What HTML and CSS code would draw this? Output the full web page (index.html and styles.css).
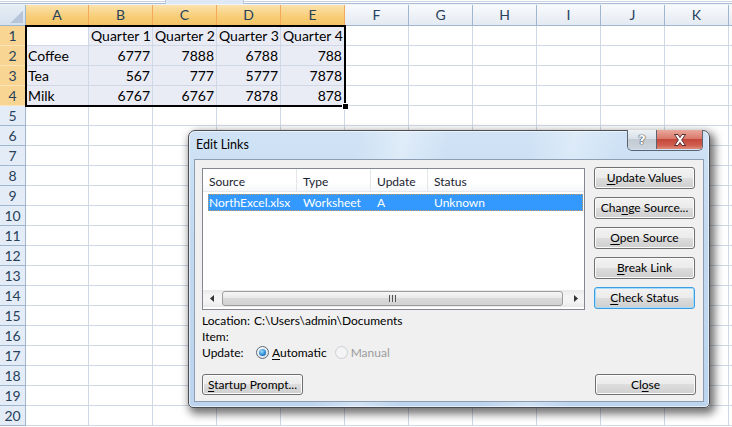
FILE: index.html
```html
<!DOCTYPE html>
<html>
<head>
<meta charset="utf-8">
<link rel="stylesheet" href="styles.css">
</head>
<body>
<div class="sheet">
  <div class="topstrip"><div class="toptab"></div></div>
  <div class="grid">
    <div class="corner"><span class="tri"></span></div>
    <div class="ch sel">A</div><div class="ch sel">B</div><div class="ch sel">C</div><div class="ch sel">D</div><div class="ch sel">E</div>
    <div class="ch">F</div><div class="ch">G</div><div class="ch">H</div><div class="ch">I</div><div class="ch">J</div><div class="ch">K</div><div class="ch"></div>

    <div class="rh sel">1</div><div></div><div class="s">Quarter 1</div><div class="s">Quarter 2</div><div class="s">Quarter 3</div><div class="s">Quarter 4</div><div></div><div></div><div></div><div></div><div></div><div></div><div></div>
    <div class="rh sel">2</div><div class="s">Coffee</div><div class="s n">6777</div><div class="s n">7888</div><div class="s n">6788</div><div class="s n">788</div><div></div><div></div><div></div><div></div><div></div><div></div><div></div>
    <div class="rh sel">3</div><div class="s">Tea</div><div class="s n">567</div><div class="s n">777</div><div class="s n">5777</div><div class="s n">7878</div><div></div><div></div><div></div><div></div><div></div><div></div><div></div>
    <div class="rh sel">4</div><div class="s">Milk</div><div class="s n">6767</div><div class="s n">6767</div><div class="s n">7878</div><div class="s n">878</div><div></div><div></div><div></div><div></div><div></div><div></div><div></div>
    <div class="rh">5</div><div></div><div></div><div></div><div></div><div></div><div></div><div></div><div></div><div></div><div></div><div></div><div></div>
    <div class="rh">6</div><div></div><div></div><div></div><div></div><div></div><div></div><div></div><div></div><div></div><div></div><div></div><div></div>
    <div class="rh">7</div><div></div><div></div><div></div><div></div><div></div><div></div><div></div><div></div><div></div><div></div><div></div><div></div>
    <div class="rh">8</div><div></div><div></div><div></div><div></div><div></div><div></div><div></div><div></div><div></div><div></div><div></div><div></div>
    <div class="rh">9</div><div></div><div></div><div></div><div></div><div></div><div></div><div></div><div></div><div></div><div></div><div></div><div></div>
    <div class="rh">10</div><div></div><div></div><div></div><div></div><div></div><div></div><div></div><div></div><div></div><div></div><div></div><div></div>
    <div class="rh">11</div><div></div><div></div><div></div><div></div><div></div><div></div><div></div><div></div><div></div><div></div><div></div><div></div>
    <div class="rh">12</div><div></div><div></div><div></div><div></div><div></div><div></div><div></div><div></div><div></div><div></div><div></div><div></div>
    <div class="rh">13</div><div></div><div></div><div></div><div></div><div></div><div></div><div></div><div></div><div></div><div></div><div></div><div></div>
    <div class="rh">14</div><div></div><div></div><div></div><div></div><div></div><div></div><div></div><div></div><div></div><div></div><div></div><div></div>
    <div class="rh">15</div><div></div><div></div><div></div><div></div><div></div><div></div><div></div><div></div><div></div><div></div><div></div><div></div>
    <div class="rh">16</div><div></div><div></div><div></div><div></div><div></div><div></div><div></div><div></div><div></div><div></div><div></div><div></div>
    <div class="rh">17</div><div></div><div></div><div></div><div></div><div></div><div></div><div></div><div></div><div></div><div></div><div></div><div></div>
    <div class="rh">18</div><div></div><div></div><div></div><div></div><div></div><div></div><div></div><div></div><div></div><div></div><div></div><div></div>
    <div class="rh">19</div><div></div><div></div><div></div><div></div><div></div><div></div><div></div><div></div><div></div><div></div><div></div><div></div>
    <div class="rh">20</div><div></div><div></div><div></div><div></div><div></div><div></div><div></div><div></div><div></div><div></div><div></div><div></div>
  </div>
  <div class="selbox"><span class="handle"></span></div>

  <div class="dialog">
    <div class="titlebar">Edit Links</div>
    <div class="capbtns">
      <div class="cap help">?</div>
      <div class="cap close">
        <svg width="16" height="14" viewBox="0 0 16 14"><path d="M2.5 1.5h3.5l2 3 2-3h3.5l-3.8 5.5 3.8 5.5h-3.5l-2-3-2 3h-3.5l3.8-5.5z" fill="#fff" stroke="#5a2a2a" stroke-width="1" stroke-linejoin="round"/></svg>
      </div>
    </div>
    <div class="client">
      <div class="toprow">
        <div class="list">
          <div class="lhead">
            <div class="hc w1">Source</div>
            <div class="hc w2">Type</div>
            <div class="hc w3">Update</div>
            <div class="hc w4">Status</div>
          </div>
          <div class="lrow">
            <div class="rc r1">NorthExcel.xlsx</div>
            <div class="rc w2">Worksheet</div>
            <div class="rc w3">A</div>
            <div class="rc w4">Unknown</div>
          </div>
          <div class="hscroll">
            <div class="arrow"><svg width="4" height="7" viewBox="0 0 4 7"><path d="M4 0v7L0 3.5z" fill="#333"/></svg></div>
            <div class="thumb"><span class="grip"></span></div>
            <div class="arrow"><svg width="4" height="7" viewBox="0 0 4 7"><path d="M0 0v7l4-3.5z" fill="#333"/></svg></div>
          </div>
        </div>
        <div class="btncol">
          <div class="btn"><u>U</u>pdate Values</div>
          <div class="btn">Cha<u>n</u>ge Source...</div>
          <div class="btn"><u>O</u>pen Source</div>
          <div class="btn"><u>B</u>reak Link</div>
          <div class="btn def"><u>C</u>heck Status</div>
        </div>
      </div>
      <div class="info">
        <div class="irow"><span class="lbl">Location:</span><span>C:\Users\admin\Documents</span></div>
        <div class="irow"><span class="lbl">Item:</span></div>
        <div class="irow"><span class="lbl">Update:</span>
          <span class="radio on"></span><span class="rtext"><u>A</u>utomatic</span>
          <span class="radio off"></span><span class="rtext dis">Manual</span>
        </div>
      </div>
      <div class="botrow">
        <div class="btn"><u>S</u>tartup Prompt...</div>
        <div class="btn">Cl<u>o</u>se</div>
      </div>
    </div>
  </div>
</div>
</body>
</html>
```

FILE: styles.css
```css
body {
  margin: 0;
  background: #fff;
  font-family: Lato, "Liberation Sans", sans-serif;
}
.sheet {
  position: relative;
  width: 732px;
  height: 427px;
  overflow: hidden;
}
.topstrip {
  height: 5px;
  background: linear-gradient(#ffffff 0 1px, #c7d3e0 1px 2px, #ffffff 2px 3px, #a9bcd2 3px 4px, #eef3f9 4px 5px);
}
.toptab {
  margin-left: 165px;
  width: 77px;
  height: 4px;
  background: #dfe9f5;
  border-left: 1px solid #b8c9dc;
  border-right: 1px solid #b8c9dc;
}
.grid {
  display: grid;
  grid-template-columns: 26px 63px repeat(10, 64px) 1fr;
  grid-template-rows: 21px repeat(20, 20px);
  font-size: 14px;
  color: #000;
}
.grid > div {
  box-sizing: border-box;
  border-right: 1px solid #d0d7e5;
  border-bottom: 1px solid #d0d7e5;
  padding: 0 2px 0 2px;
  line-height: 20px;
  white-space: nowrap;
  overflow: hidden;
}
.grid > .s { background: #eaecf5; }
.grid > .n { text-align: right; }
.grid > .corner {
  position: relative;
  background: linear-gradient(#e6edf6, #d6e1ee);
  border-right: 1px solid #9eb6ce;
  border-bottom: 1px solid #9eb6ce;
}
.tri {
  position: absolute;
  right: 2px;
  bottom: 2px;
  width: 12px;
  height: 12px;
  background: linear-gradient(135deg, transparent 50%, #b6c6d8 50%);
}
.grid > .ch {
  background: linear-gradient(#f8fafd, #e4eaf2);
  border-right: 1px solid #9eb6ce;
  border-bottom: 1px solid #9eb6ce;
  text-align: center;
  color: #27415b;
  padding: 0;
}
.grid > .ch.sel {
  background: linear-gradient(#fbe2ae, #f7cd76 60%, #f4c466);
  border-right-color: #f3a85a;
  border-bottom-color: #f29536;
}
.grid > .rh {
  background: #e4ecf7;
  border-right: 1px solid #9eb6ce;
  border-bottom: 1px solid #9eb6ce;
  text-align: center;
  color: #27415b;
  padding: 0;
}
.grid > .rh.sel {
  background: #f9d594;
  border-right-color: #f29536;
  border-bottom-color: #fbe4b9;
}
.selbox {
  position: absolute;
  left: 25px;
  top: 25px;
  width: 321px;
  height: 82px;
  box-sizing: border-box;
  border: 2px solid #000;
}
.handle {
  position: absolute;
  right: -5px;
  bottom: -5px;
  width: 5px;
  height: 5px;
  background: #000;
  border: 1px solid #fff;
}

/* dialog */
.dialog {
  position: absolute;
  left: 188px;
  top: 130px;
  width: 522px;
  height: 278px;
  box-sizing: border-box;
  border: 1px solid #4b4f55;
  border-radius: 7px 7px 5px 5px;
  background:
    linear-gradient(100deg, rgba(255,255,255,0) 30%, rgba(255,255,255,.35) 38%, rgba(255,255,255,0) 46%, rgba(255,255,255,0) 60%, rgba(255,255,255,.3) 68%, rgba(255,255,255,0) 76%),
    linear-gradient(#d0e3f6, #c3d9f0 40%, #bcd4ee);
  box-shadow: inset 0 0 0 1px rgba(255,255,255,.55), 3px 4px 9px 2px rgba(0,0,0,.55);
  padding: 0 5px 5px 5px;
  display: flex;
  flex-direction: column;
  font-family: Lato, "Liberation Sans", sans-serif;
  font-size: 12px;
  color: #000;
}
.titlebar {
  height: 28px;
  line-height: 28px;
  padding-left: 2px;
  font-size: 12.5px;
}
.capbtns {
  position: absolute;
  top: -1px;
  right: 6px;
  display: flex;
  height: 20px;
  border: 1px solid #5b6470;
  border-top: none;
  border-radius: 0 0 5px 5px;
  overflow: hidden;
}
.cap {
  height: 19px;
  display: flex;
  align-items: center;
  justify-content: center;
}
.help {
  width: 28px;
  background: linear-gradient(#eef2f6, #d9e0e8 45%, #c2cad4 50%, #cdd4dc);
  border-right: 1px solid #5b6470;
  font: bold 13px "DejaVu Sans", sans-serif;
  color: #fff;
  text-shadow: 0 0 1px #3a3f46, 0 0 1px #3a3f46, 0 0 1px #3a3f46;
}
.close {
  width: 45px;
  background: linear-gradient(#e9a99c, #d9796b 45%, #c5483c 50%, #cf5d4f 80%, #e08c7c);
}
.client {
  flex: 1;
  border: 1px solid #8e9eb2;
  background: #f0f0f0;
  padding: 8px 7px 6px 7px;
  display: flex;
  flex-direction: column;
}
.toprow {
  display: flex;
  gap: 9px;
}
.list {
  width: 383px;
  height: 142px;
  box-sizing: border-box;
  border: 1px solid #828790;
  background: #fff;
  display: flex;
  flex-direction: column;
}
.lhead {
  display: flex;
  height: 23px;
  line-height: 25px;
  border-bottom: 1px solid #e6e8eb;
  background: linear-gradient(#fff, #fff 60%, #f6f7f9);
  color: #1a2230;
  box-sizing: border-box;
}
.hc {
  padding-left: 6px;
  box-sizing: border-box;
  border-right: 1px solid #e3e5e8;
}
.w1 { width: 94px; }
.w2 { width: 74px; }
.w3 { width: 57px; }
.w4 { flex: 1; border-right: none; }
.lrow {
  display: flex;
  height: 17px;
  line-height: 15px;
  margin: 2px 1px 0 5px;
  background: #3399ff;
  border: 1px dotted #c89a62;
  box-sizing: border-box;
  color: #fff;
}
.rc {
  padding-left: 6px;
  box-sizing: border-box;
}
.lrow .r1 { width: 88px; padding-left: 0; }
.lrow .w4 { flex: 1; }
.hscroll {
  margin-top: auto;
  margin-bottom: 2px;
  height: 17px;
  display: flex;
  align-items: center;
  background: linear-gradient(#e9e9e9, #f4f4f4 30%, #f4f4f4 70%, #e9e9e9);
}
.arrow {
  width: 17px;
  height: 17px;
  display: flex;
  align-items: center;
  justify-content: center;
}
.thumb {
  flex: 1;
  margin: 0 4px 0 2px;
  height: 15px;
  box-sizing: border-box;
  border: 1px solid #9d9d9d;
  border-radius: 3px;
  background: linear-gradient(#f6f6f6, #e9e9e9 45%, #d9d9d9 50%, #d2d2d2);
  display: flex;
  align-items: center;
  justify-content: center;
}
.grip {
  width: 7px;
  height: 7px;
  background: repeating-linear-gradient(90deg, #545454 0 1px, #e0e0e0 1px 3px);
}
.btncol {
  display: flex;
  flex-direction: column;
  gap: 8px;
  margin-top: -1px;
}
.btn {
  width: 101px;
  height: 22px;
  box-sizing: border-box;
  border: 1px solid #707070;
  border-radius: 3px;
  background: linear-gradient(#f2f2f2, #ebebeb 50%, #dddddd 50%, #cfcfcf);
  box-shadow: inset 0 0 0 1px #fbfbfb;
  text-align: center;
  line-height: 20px;
  white-space: nowrap;
}
.btn.def {
  border-color: #3c9ee0;
  box-shadow: inset 0 0 0 1px #a9dcfa;
}
.info {
  margin-top: 2px;
}
.irow {
  display: flex;
  align-items: center;
  height: 16px;
}
.lbl {
  width: 52px;
  padding-left: 0;
}
.radio {
  width: 13px;
  height: 13px;
  box-sizing: border-box;
  border-radius: 50%;
  margin-left: 2px;
  margin-right: 3px;
  display: flex;
  align-items: center;
  justify-content: center;
}
.radio.on {
  border: 1px solid #5d6b7c;
  background: radial-gradient(circle at 40% 35%, #ffffff, #e2e4e8 70%, #cfd3d9);
}
.radio.on::after {
  content: "";
  width: 7px;
  height: 7px;
  border-radius: 50%;
  background: radial-gradient(circle at 40% 35%, #a6dcfb, #2a8ad6 55%, #0f4f8f);
}
.radio.off {
  border: 1px solid #cbcfd4;
  background: #f4f4f4;
  margin-left: 8px;
}
.rtext.dis { color: #9c9c9c; }
.botrow {
  margin-top: auto;
  display: flex;
  justify-content: space-between;
}
.botrow .btn { height: 21px; line-height: 19px; }
u { text-decoration: underline; text-underline-offset: 2px; }
```
